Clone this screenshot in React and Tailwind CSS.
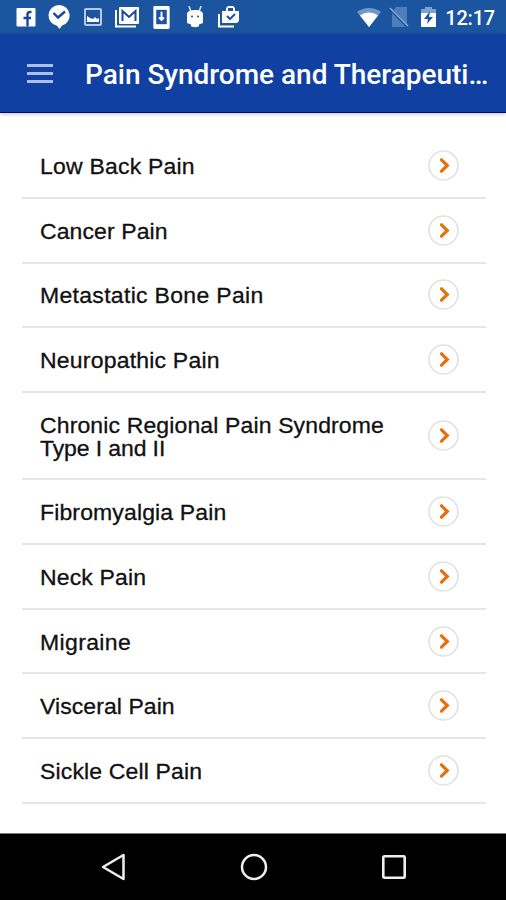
const items = [
  { label: 'Low Back Pain', text: 'tracking-[0.2px]' },
  { label: 'Cancer Pain', text: 'tracking-[0.1px]' },
  { label: 'Metastatic Bone Pain', text: 'tracking-[0.3px]' },
  { label: 'Neuropathic Pain', text: 'tracking-[0.2px]' },
  { label: 'Chronic Regional Pain Syndrome', second: 'Type I and II', text: 'tracking-[0.13px]' },
  { label: 'Fibromyalgia Pain', text: 'tracking-[0.13px]' },
  { label: 'Neck Pain', text: 'tracking-[0.15px]' },
  { label: 'Migraine', text: 'tracking-[0.35px]' },
  { label: 'Visceral Pain', text: 'tracking-[0.07px]' },
  { label: 'Sickle Cell Pain', text: 'tracking-[0.15px]' },
];

const Icon = ({ className, box, children }) => (
  <svg className={`block shrink-0 ${className}`} viewBox={box} fill="none">
    {children}
  </svg>
);

const StatusBar = () => (
  <div className="flex h-[34px] shrink-0 items-center bg-[#1b559f] pl-4 pr-[11px]">
    <div className="flex items-center gap-[12px]">
      {/* facebook */}
      <Icon className="h-5 w-5" box="0 0 20 20">
        <rect x="0.500" y="1" width="19" height="18.500" rx="1" fill="#fff" />
        <path d="M15.500 5h-1.500c-1.800 0-2.500 1-2.500 2.500v12M7.500 11h7.500" stroke="#1b459f" strokeWidth="2.400" />
      </Icon>
      {/* messenger check */}
      <Icon className="h-6 w-[22px]" box="0 0 22 24">
        <path fill="#fff" d="M11 0a10.5 10.5 0 0 0-2 20.8L11.5 24l2.5-3.4A10.5 10.5 0 0 0 11 0z" />
        <path d="M5.500 8l4.500 4.500 7-6" stroke="#1b459f" strokeWidth="2.400" />
      </Icon>
      {/* image */}
      <Icon className="ml-0.5 h-[18px] w-[18px]" box="0 0 18 18">
        <rect x="1" y="1" width="16" height="16" rx="1" stroke="#b9c9e4" strokeWidth="2" />
        <path fill="#fff" d="M3 14V8l3 2 3 1 2-2 2 2 2-1v4z" />
      </Icon>
      {/* mail */}
      <Icon className="ml-px h-[22px] w-[25px]" box="0 0 25 22">
        <path d="M1 4v16.5h20" stroke="#fff" strokeWidth="2" />
        <rect x="4" y="1" width="20" height="17" rx="1" fill="#fff" />
        <path d="M7.500 15V5l6.500 6 6.500-6v10" stroke="#1b459f" strokeWidth="2" />
      </Icon>
      {/* phone download */}
      <Icon className="ml-px h-[23px] w-[17px]" box="0 0 17 24">
        <rect width="17" height="24" rx="1.5" fill="#fff" />
        <rect x="3" y="4" width="11" height="15" fill="#1b559f" />
        <path d="M8.5 6v8M6 12l2.500 2.500 2.500-2.500" stroke="#fff" strokeWidth="2" />
      </Icon>
      {/* android */}
      <Icon className="ml-[4px] h-[22px] w-[18px]" box="0 0 18 22">
        <path d="M3 0l2 6M15 0l-2 6" stroke="#dfe8f5" strokeWidth="1.500" />
        <path fill="#fff" d="M1 8c0-2 3-4 8-4s8 2 8 4v9l-4 1.500V20c0 1.500-8 1.500-8 0v-1.500L1 17z" />
        <circle cx="6" cy="10.500" r="1" fill="#1b559f" />
        <circle cx="12" cy="10.500" r="1" fill="#1b559f" />
      </Icon>
      {/* briefcase check */}
      <Icon className="ml-[2px] h-[22px] w-[21px]" box="0 0 21 22">
        <path d="M1 8v12.500h15" stroke="#fff" strokeWidth="2" />
        <path fillRule="evenodd" fill="#fff" d="M4 5h4V2l2-2h5l2 2v3h4v10l-2 2H4zM10 2v3h5V2z" />
        <path d="M9 10l3 3 5-5" stroke="#1b559f" strokeWidth="2" />
      </Icon>
    </div>
    <div className="ml-auto flex items-center">
      {/* wifi */}
      <Icon className="h-[19px] w-6" box="0 0 24 19">
        <path fill="#6d98ca" d="M0 4C7-1.300 17-1.300 24 4L12 19z" />
        <path fill="#fff" d="M3 7.500c5.500-4 12.500-4 18 0L12 19z" />
      </Icon>
      {/* no sim */}
      <Icon className="ml-[8px] h-5 w-5" box="0 0 20 20">
        <path fill="#4d7fbd" d="M7 0h11v20H3V5z" />
        <path d="M0 1l19 19" stroke="#1b559f" strokeWidth="3" />
        <path d="M1 1l18 18" stroke="#8badd5" strokeWidth="1.500" />
      </Icon>
      {/* battery charging */}
      <Icon className="ml-[12px] h-5 w-[15px]" box="0 0 15 20">
        <path fill="#7da3d0" d="M0 2h4V0h7v2h4v5H0z" />
        <path fill="#fff" d="M0 6h15v14H0z" />
        <path fill="#1b559f" d="M9 4l-6 8h4l-1 5 6-7H8z" />
      </Icon>
      <span className="ml-[9px] pt-px font-['Roboto',sans-serif] text-[20px] leading-5 font-medium tracking-[-0.2px] text-white">12:17</span>
    </div>
  </div>
);

const Header = () => (
  <header className="relative flex h-[79px] shrink-0 items-center border-b border-[#04057f] bg-[#1041a2] pl-[27px] shadow-[0_1px_4px_rgba(0,0,0,0.25)]">
    <div className="flex w-[26px] flex-col gap-[5px]">
      <span className="h-[3px] bg-[#aebce6]" />
      <span className="h-[3px] bg-[#aebce6]" />
      <span className="h-[3px] bg-[#aebce6]" />
    </div>
    <h1 className="ml-8 pt-[3px] font-['Roboto',sans-serif] text-[28px] leading-8 font-medium tracking-[-0.02px] whitespace-nowrap text-white">
      Pain Syndrome and Therapeuti…
    </h1>
  </header>
);

const Row = ({ item }) => (
  <li className={`flex items-center justify-between border-b-2 border-[#e5e5e5] pl-[18px] pr-[27px] ${item.second ? 'h-[87.500px]' : 'h-[64.670px]'}`}>
    <div className={`origin-left scale-x-[1.045] pt-[2px] text-[22px] leading-[23px] whitespace-nowrap text-[#111] [-webkit-text-stroke:0.3px_#111] ${item.text}`}>
      <div>{item.label}</div>
      {item.second && <div className="tracking-[-0.1px]">{item.second}</div>}
    </div>
    <Icon className="h-[31px] w-[31px]" box="0 0 31 31">
      <circle cx="15.500" cy="15.500" r="14.500" stroke="#e2e2e2" strokeWidth="1.700" />
      <path d="M13.500 9.800l5.800 5.700-5.800 5.700" stroke="#e2700f" strokeWidth="3.200" strokeLinecap="round" />
    </Icon>
  </li>
);

const NavBar = () => (
  <nav className="flex h-[67px] shrink-0 items-center border-t border-[#777] bg-black pl-[101px]">
    <Icon className="h-7 w-6" box="0 0 24 28">
      <path d="M22.500 2v24L2 14z" stroke="#eee" strokeWidth="2.500" strokeLinejoin="round" />
    </Icon>
    <Icon className="ml-[115px] h-7 w-7" box="0 0 28 28">
      <circle cx="14" cy="14" r="12" stroke="#eee" strokeWidth="2.500" />
    </Icon>
    <Icon className="ml-[114px] h-6 w-6" box="0 0 24 24">
      <rect x="1.300" y="1.300" width="21.400" height="21.400" rx="1" stroke="#eee" strokeWidth="2.600" />
    </Icon>
  </nav>
);

export default function App() {
  return (
    <div className="flex h-[900px] w-[506px] flex-col overflow-hidden bg-white font-['Liberation_Sans',sans-serif]">
      <StatusBar />
      <Header />
      <main className="flex-1 pt-[21.300px] pl-[22px] pr-5">
        <ul className="flex flex-col">
          {items.map((item) => <Row key={item.label} item={item} />)}
        </ul>
      </main>
      <NavBar />
    </div>
  );
}
